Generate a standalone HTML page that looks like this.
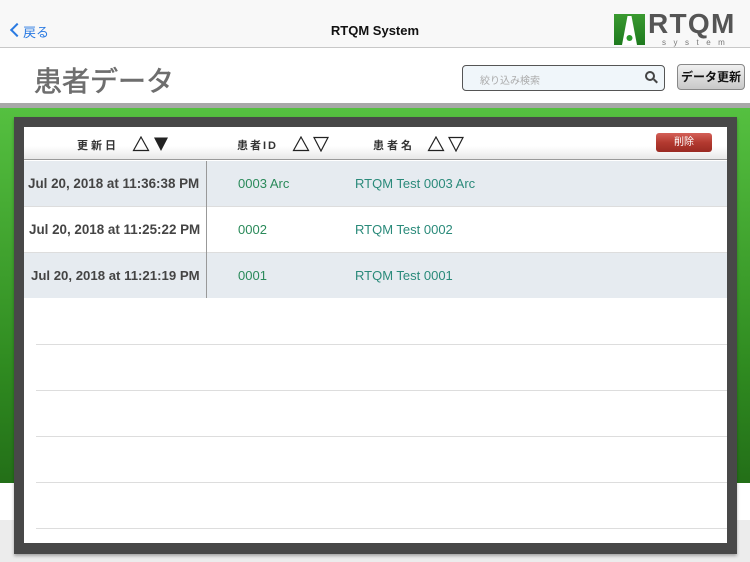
<!DOCTYPE html>
<html><head><meta charset="utf-8"><style>
*{margin:0;padding:0;box-sizing:border-box}
body{width:750px;height:562px;overflow:hidden;position:relative;background:#fff;font-family:"Liberation Sans","Noto Sans CJK JP",sans-serif}
.abs{position:absolute}
.tri{position:absolute}
</style></head><body>
<div class="abs" style="left:0;top:0;width:750px;height:48px;background:#f8f8f8;border-bottom:1px solid #c8c8c8"></div>
<div class="abs" style="left:12px;top:25px;width:10px;height:10px;border-left:2px solid #2a7ae2;border-bottom:2px solid #2a7ae2;transform:rotate(45deg)"></div>
<div class="abs" style="left:23px;top:22px;font-size:13px;color:#2a7ae2">戻る</div>
<div class="abs" style="left:0;top:23px;width:750px;text-align:center;font-size:13px;font-weight:bold;color:#111">RTQM System</div>
<svg class="abs" style="left:614px;top:14px" width="31" height="31" viewBox="0 0 31 31">
<defs><linearGradient id="g" x1="0" y1="0" x2="0" y2="1"><stop offset="0" stop-color="#3a9a30"/><stop offset="1" stop-color="#1e7a1e"/></linearGradient></defs>
<rect width="31" height="31" fill="url(#g)"/><path d="M13.5 2 L17.5 2 L23 31 L8 31Z" fill="#fff"/><circle cx="15.5" cy="24" r="3" fill="#2a9a2a"/></svg>
<div class="abs" style="left:648px;top:9px;font-size:28px;color:#555;line-height:30px;font-weight:bold;letter-spacing:1.3px">RTQM</div>
<div class="abs" style="left:662px;top:38px;font-size:8px;color:#777;letter-spacing:7.5px">system</div>
<div class="abs" style="left:34px;top:60px;font-size:28px;color:#6e6e6e;-webkit-text-stroke:0.6px #6e6e6e">患者データ</div>
<div class="abs" style="left:462px;top:65px;width:203px;height:26px;border:1px solid #555;border-radius:4px;background:#f0f6fa"></div>
<div class="abs" style="left:480px;top:72px;font-size:10px;color:#aaa">絞り込み検索</div>
<div class="abs" style="left:645px;top:71px;width:10px;height:10px;border:2px solid #444;border-radius:50%"></div>
<div class="abs" style="left:653px;top:80px;width:5px;height:2px;background:#444;transform:rotate(45deg)"></div>
<div class="abs" style="left:677px;top:64px;width:68px;height:26px;border:1px solid #888;border-radius:4px;background:linear-gradient(#f0f0f0,#c8c8c8);font-size:12px;font-weight:bold;text-align:center;line-height:24px;color:#111">データ更新</div>
<div class="abs" style="left:0;top:103px;width:750px;height:5px;background:#a8a8a8"></div>
<div class="abs" style="left:0;top:108px;width:750px;height:375px;background:linear-gradient(#55c040,#2f8a20 70%,#236f18)"></div>
<div class="abs" style="left:0;top:483px;width:750px;height:37px;background:#fff"></div>
<div class="abs" style="left:0;top:520px;width:750px;height:42px;background:#ececec"></div>
<div class="abs" style="left:14px;top:117px;width:723px;height:437px;background:#484848;box-shadow:0 2px 3px rgba(0,0,0,.3)"></div>
<div class="abs" style="left:24px;top:127px;width:703px;height:416px;background:#fff"></div>
<div class="abs" style="left:24px;top:127px;width:703px;height:33px;background:linear-gradient(#fff,#fff 60%,#e8e8e8);border-bottom:1px solid #999"></div>
<div class="abs" style="left:77px;top:137px;font-size:11px;font-weight:bold;color:#333;letter-spacing:3px">更新日</div>
<svg class="tri" style="left:132px;top:136px" width="40" height="16" viewBox="0 0 40 16">
<path d="M9 1 L16.5 14.5 L1.5 14.5Z" fill="none" stroke="#222" stroke-width="1.2"/>
<path d="M22 1.5 L36 1.5 L29 15Z" fill="#222"/></svg>
<div class="abs" style="left:237px;top:137px;font-size:11px;font-weight:bold;color:#333;letter-spacing:2px">患者ID</div>
<svg class="tri" style="left:292px;top:136px" width="40" height="16" viewBox="0 0 40 16">
<path d="M9 1 L16.5 14.5 L1.5 14.5Z" fill="none" stroke="#222" stroke-width="1.2"/>
<path d="M22 1.5 L36 1.5 L29 15Z" fill="none" stroke="#222" stroke-width="1.2"/></svg>
<div class="abs" style="left:373px;top:137px;font-size:11px;font-weight:bold;color:#333;letter-spacing:3px">患者名</div>
<svg class="tri" style="left:427px;top:136px" width="40" height="16" viewBox="0 0 40 16">
<path d="M9 1 L16.5 14.5 L1.5 14.5Z" fill="none" stroke="#222" stroke-width="1.2"/>
<path d="M22 1.5 L36 1.5 L29 15Z" fill="none" stroke="#222" stroke-width="1.2"/></svg>
<div class="abs" style="left:656px;top:133px;width:56px;height:19px;border-radius:3px;background:linear-gradient(#d46058,#b33a30 50%,#9a2a22);font-size:10px;color:#fff;text-align:center;line-height:19px">削除</div>
<div class="abs" style="left:24px;top:161px;width:703px;height:45px;background:#e6ebf0"></div>
<div class="abs" style="left:24px;top:207px;width:703px;height:45px;background:#fff"></div>
<div class="abs" style="left:24px;top:253px;width:703px;height:45px;background:#e6ebf0"></div>
<div class="abs" style="left:24px;top:206px;width:703px;height:1px;background:#ddd"></div>
<div class="abs" style="left:24px;top:252px;width:703px;height:1px;background:#ddd"></div>
<div class="abs" style="left:206px;top:161px;width:1px;height:137px;background:#999"></div>
<div class="abs" style="left:28px;top:176px;font-size:13.4px;font-weight:bold;color:#444">Jul 20, 2018 at 11:36:38 PM</div>
<div class="abs" style="left:29px;top:222px;font-size:13.4px;font-weight:bold;color:#444">Jul 20, 2018 at 11:25:22 PM</div>
<div class="abs" style="left:31px;top:268px;font-size:13.2px;font-weight:bold;color:#444">Jul 20, 2018 at 11:21:19 PM</div>
<div class="abs" style="left:238px;top:176px;font-size:13px;color:#2a8a5a">0003 Arc</div>
<div class="abs" style="left:238px;top:222px;font-size:13px;color:#2a8a5a">0002</div>
<div class="abs" style="left:238px;top:268px;font-size:13px;color:#2a8a5a">0001</div>
<div class="abs" style="left:355px;top:176px;font-size:13px;color:#2a8a7a">RTQM Test 0003 Arc</div>
<div class="abs" style="left:355px;top:222px;font-size:13px;color:#2a8a7a">RTQM Test 0002</div>
<div class="abs" style="left:355px;top:268px;font-size:13px;color:#2a8a7a">RTQM Test 0001</div>
<div class="abs" style="left:36px;top:344px;width:691px;height:1px;background:#ddd"></div>
<div class="abs" style="left:36px;top:390px;width:691px;height:1px;background:#ddd"></div>
<div class="abs" style="left:36px;top:436px;width:691px;height:1px;background:#ddd"></div>
<div class="abs" style="left:36px;top:482px;width:691px;height:1px;background:#ddd"></div>
<div class="abs" style="left:36px;top:528px;width:691px;height:1px;background:#ddd"></div>
</body></html>
